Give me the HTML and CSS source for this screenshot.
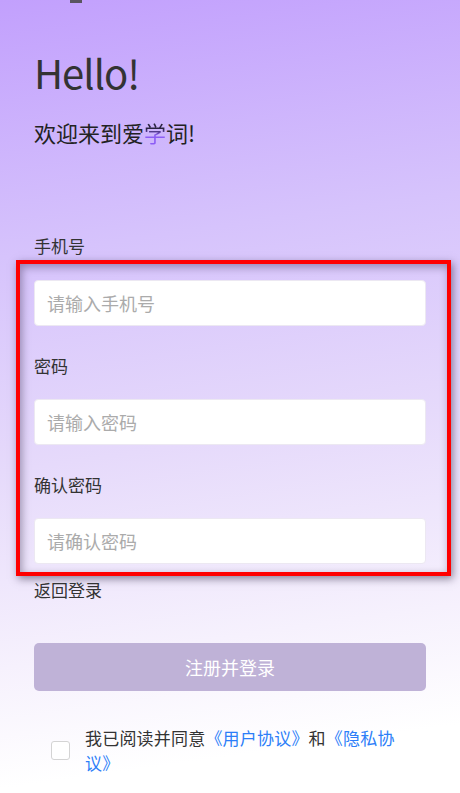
FILE: index.html
```html
<!DOCTYPE html>
<html lang="zh-CN">
<head>
    <meta charset="UTF-8">
    <meta name="viewport" content="width=device-width, initial-scale=1.0">
    <title>注册 - 爱学词</title>
    <link rel="stylesheet" href="styles.css">
</head>
<body>
    <div class="page">
        <div class="top-mark"></div>

        <h1 class="hello">Hello!</h1>
        <p class="welcome">欢迎来到爱<span class="brand">学</span>词!</p>

        <div class="field-label first">手机号</div>
        <div class="highlight">
            <input class="field-input" type="text" placeholder="请输入手机号">
            <div class="field-label">密码</div>
            <input class="field-input" type="password" placeholder="请输入密码">
            <div class="field-label">确认密码</div>
            <input class="field-input" type="password" placeholder="请确认密码">
        </div>

        <a class="back-link" href="#">返回登录</a>

        <button class="btn-submit" disabled>注册并登录</button>

        <div class="agree">
            <span class="checkbox"></span>
            <p class="agree-text">我已阅读并同意<a href="#">《用户协议》</a>和<a href="#">《隐私协议》</a></p>
        </div>
    </div>
</body>
</html>
```

FILE: styles.css
```css
html, body {
    margin: 0;
    height: 100%;
}
body {
    font-family: "Noto Sans CJK SC", "Noto Sans", sans-serif;
    background: linear-gradient(172deg, #c2a0fd 0%, #d6c3fc 30%, #e6dafb 55%, #f6f1fd 78%, #ffffff 92%);
    color: #333;
    overflow: hidden;
}
.page {
    padding: 0 34px;
}
.top-mark {
    width: 12px;
    height: 3px;
    margin-left: 36px;
    background: #5a5560;
}
.hello {
    margin: 44px 0 0;
    font-size: 40px;
    font-weight: 400;
    line-height: 50px;
    letter-spacing: -1px;
    color: #333;
}
.welcome {
    margin: 20px 0 0;
    font-size: 22px;
    line-height: 30px;
    color: #222;
}
.brand {
    background: linear-gradient(180deg, #2a2340 40%, #8c5cf5 60%);
    -webkit-background-clip: text;
    background-clip: text;
    color: transparent;
}
.field-label {
    font-size: 17px;
    line-height: 22px;
    color: #333;
    margin: 29px 0 22px;
}
.field-label.first {
    margin: 88px 0 3px;
}
.highlight {
    margin: 0 -25px 0 -18px;
    padding: 16px 21px 8px 14px;
    border: 4px solid #ff0000;
    box-shadow: 2px 3px 8px rgba(40, 30, 60, 0.5), inset 2px 3px 9px rgba(40, 30, 60, 0.4);
}
.field-input {
    display: block;
    box-sizing: border-box;
    width: 100%;
    height: 46px;
    padding: 0 12px;
    border: 1px solid #ece8f2;
    border-radius: 4px;
    background: #fff;
    font-family: inherit;
    font-size: 18px;
    outline: none;
}
.field-input::placeholder {
    color: #ababab;
}
.back-link {
    display: block;
    margin-top: 3px;
    font-size: 17px;
    line-height: 22px;
    color: #333;
    text-decoration: none;
}
.btn-submit {
    display: block;
    width: 100%;
    height: 48px;
    margin-top: 42px;
    border: none;
    border-radius: 5px;
    background: #bfb2d7;
    color: #fff;
    font-family: inherit;
    font-size: 18px;
}
.agree {
    display: flex;
    align-items: center;
    gap: 15px;
    margin-top: 34px;
    padding-left: 17px;
}
.checkbox {
    flex: none;
    width: 17px;
    height: 17px;
    border: 1px solid #d4d4d4;
    border-radius: 3px;
    background: #fff;
}
.agree-text {
    margin: 0;
    width: 321px;
    font-size: 17px;
    line-height: 25px;
    letter-spacing: 0.2px;
    text-spacing-trim: space-all;
    color: #333;
}
.agree-text a {
    color: #2c7ef8;
    text-decoration: none;
}
```
